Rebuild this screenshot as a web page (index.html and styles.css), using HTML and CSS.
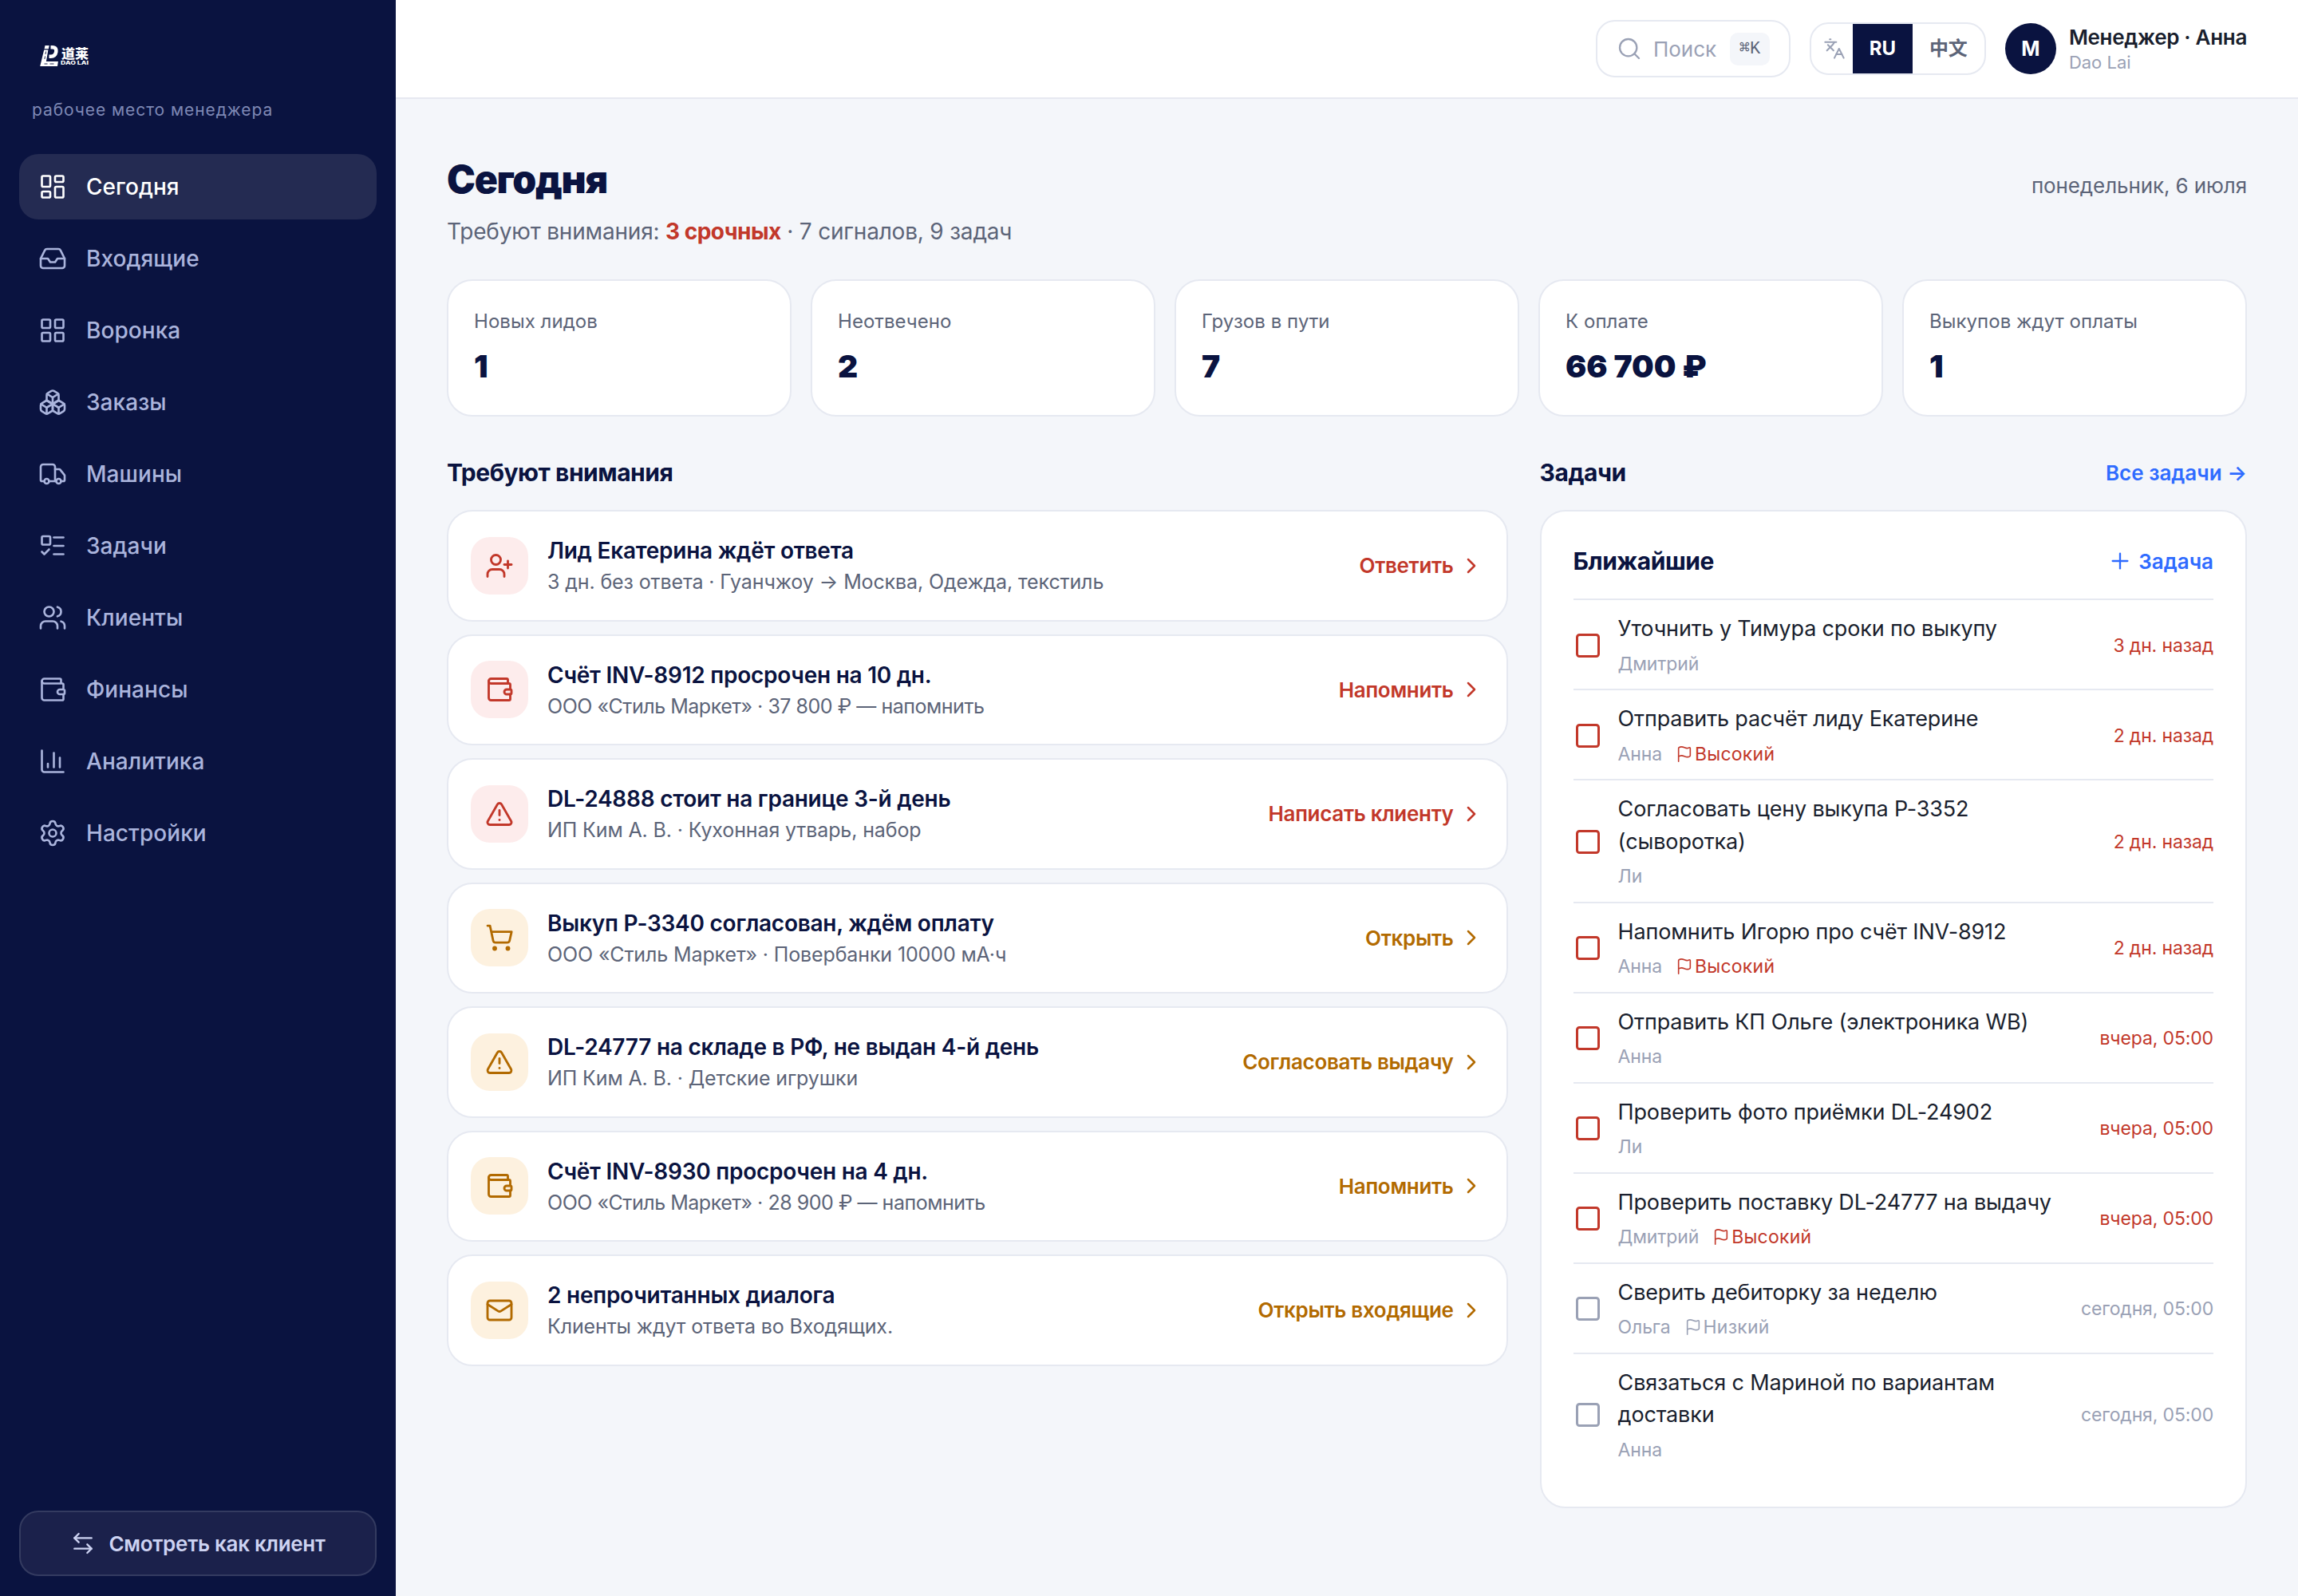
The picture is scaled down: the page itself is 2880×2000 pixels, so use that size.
FILE: index.html
```html
<!DOCTYPE html>
<html lang="ru">
<head>
<meta charset="utf-8">
<title>Сегодня · Dao Lai</title>
<link rel="stylesheet" href="styles.css">
</head>
<body>
<svg class="sprite" aria-hidden="true">
  <symbol id="dashboard" viewBox="0 0 24 24"><rect x="3" y="3" width="7" height="9" rx="1"/><rect x="14" y="3" width="7" height="5" rx="1"/><rect x="14" y="12" width="7" height="9" rx="1"/><rect x="3" y="16" width="7" height="5" rx="1"/></symbol>
  <symbol id="inbox" viewBox="0 0 24 24"><path d="M22 12h-6l-2 3h-4l-2-3H2"/><path d="M5.45 5.11 2 12v6a2 2 0 0 0 2 2h16a2 2 0 0 0 2-2v-6l-3.45-6.89A2 2 0 0 0 16.76 4H7.24a2 2 0 0 0-1.79 1.11z"/></symbol>
  <symbol id="grid" viewBox="0 0 24 24"><rect x="3" y="3" width="7" height="7" rx="1"/><rect x="14" y="3" width="7" height="7" rx="1"/><rect x="14" y="14" width="7" height="7" rx="1"/><rect x="3" y="14" width="7" height="7" rx="1"/></symbol>
  <symbol id="boxes" viewBox="0 0 24 24"><path d="M2.97 12.92A2 2 0 0 0 2 14.63v3.24a2 2 0 0 0 .97 1.71l3 1.8a2 2 0 0 0 2.06 0L12 19v-5.5l-5-3-4.03 2.42Z"/><path d="m7 16.5-4.74-2.85"/><path d="m7 16.5 5-3"/><path d="M7 16.5v5.17"/><path d="M12 13.5V19l3.97 2.38a2 2 0 0 0 2.06 0l3-1.8a2 2 0 0 0 .97-1.71v-3.24a2 2 0 0 0-.97-1.71L17 10.5l-5 3Z"/><path d="m17 16.5-5-3"/><path d="m17 16.5 4.74-2.85"/><path d="M17 16.5v5.17"/><path d="M7.97 4.42A2 2 0 0 0 7 6.13v4.37l5 3 5-3V6.13a2 2 0 0 0-.97-1.71l-3-1.8a2 2 0 0 0-2.06 0l-3 1.8Z"/><path d="M12 8 7.26 5.15"/><path d="m12 8 4.74-2.85"/><path d="M12 13.5V8"/></symbol>
  <symbol id="truck" viewBox="0 0 24 24"><path d="M14 18V6a2 2 0 0 0-2-2H4a2 2 0 0 0-2 2v11a1 1 0 0 0 1 1h2"/><path d="M15 18H9"/><path d="M19 18h2a1 1 0 0 0 1-1v-3.65a1 1 0 0 0-.22-.624l-3.48-4.35A1 1 0 0 0 17.52 8H14"/><circle cx="17" cy="18" r="2"/><circle cx="7" cy="18" r="2"/></symbol>
  <symbol id="todo" viewBox="0 0 24 24"><rect x="3" y="4" width="7" height="7" rx="1"/><path d="m3 17 2 2 4-4"/><path d="M13 5h8"/><path d="M13 12h8"/><path d="M13 19h8"/></symbol>
  <symbol id="users" viewBox="0 0 24 24"><path d="M16 21v-2a4 4 0 0 0-4-4H6a4 4 0 0 0-4 4v2"/><circle cx="9" cy="7" r="4"/><path d="M22 21v-2a4 4 0 0 0-3-3.87"/><path d="M16 3.13a4 4 0 0 1 0 7.75"/></symbol>
  <symbol id="wallet" viewBox="0 0 24 24"><path d="M19 7V4a1 1 0 0 0-1-1H5a2 2 0 0 0 0 4h15a1 1 0 0 1 1 1v4h-3a2 2 0 0 0 0 4h3a1 1 0 0 0 1-1v-2a1 1 0 0 0-1-1"/><path d="M3 5v14a2 2 0 0 0 2 2h15a1 1 0 0 0 1-1v-4"/></symbol>
  <symbol id="chart" viewBox="0 0 24 24"><path d="M3 3v16a2 2 0 0 0 2 2h16"/><path d="M18 17V9"/><path d="M13 17V5"/><path d="M8 17v-3"/></symbol>
  <symbol id="settings" viewBox="0 0 24 24"><path d="M9.671 4.136a2.34 2.34 0 0 1 4.659 0 2.34 2.34 0 0 0 3.319 1.915 2.34 2.34 0 0 1 2.33 4.033 2.34 2.34 0 0 0 0 3.831 2.34 2.34 0 0 1-2.33 4.033 2.34 2.34 0 0 0-3.319 1.915 2.34 2.34 0 0 1-4.659 0 2.34 2.34 0 0 0-3.32-1.915 2.34 2.34 0 0 1-2.33-4.033 2.34 2.34 0 0 0 0-3.831A2.34 2.34 0 0 1 6.35 6.051a2.34 2.34 0 0 0 3.319-1.915"/><circle cx="12" cy="12" r="3"/></symbol>
  <symbol id="swap" viewBox="0 0 24 24"><path d="M8 3 4 7l4 4"/><path d="M4 7h16"/><path d="m16 21 4-4-4-4"/><path d="M20 17H4"/></symbol>
  <symbol id="search" viewBox="0 0 24 24"><circle cx="11" cy="11" r="8"/><path d="m21 21-4.3-4.3"/></symbol>
  <symbol id="languages" viewBox="0 0 24 24"><path d="m5 8 6 6"/><path d="m4 14 6-6 2-3"/><path d="M2 5h12"/><path d="M7 2h1"/><path d="m22 22-5-10-5 10"/><path d="M14 18h6"/></symbol>
  <symbol id="user-plus" viewBox="0 0 24 24"><path d="M16 21v-2a4 4 0 0 0-4-4H6a4 4 0 0 0-4 4v2"/><circle cx="9" cy="7" r="4"/><path d="M19 8v6"/><path d="M22 11h-6"/></symbol>
  <symbol id="alert" viewBox="0 0 24 24"><path d="m21.73 18-8-14a2 2 0 0 0-3.48 0l-8 14A2 2 0 0 0 4 21h16a2 2 0 0 0 1.73-3"/><path d="M12 9v4"/><path d="M12 17h.01"/></symbol>
  <symbol id="cart" viewBox="0 0 24 24"><circle cx="8" cy="21" r="1"/><circle cx="19" cy="21" r="1"/><path d="M2.05 2.05h2l2.66 12.42a2 2 0 0 0 2 1.58h9.78a2 2 0 0 0 1.95-1.57l1.65-7.43H5.12"/></symbol>
  <symbol id="mail" viewBox="0 0 24 24"><rect x="2" y="4" width="20" height="16" rx="2"/><path d="m22 7-8.991 5.727a2 2 0 0 1-2.009 0L2 7"/></symbol>
  <symbol id="chevron" viewBox="0 0 24 24"><path d="m9 18 6-6-6-6"/></symbol>
  <symbol id="plus" viewBox="0 0 24 24"><path d="M5 12h14"/><path d="M12 5v14"/></symbol>
  <symbol id="square" viewBox="0 0 24 24"><rect x="3" y="3" width="18" height="18" rx="2"/></symbol>
  <symbol id="flag" viewBox="0 0 24 24"><path d="M4 22V4a1 1 0 0 1 .4-.8A6 6 0 0 1 8 2c3 0 5 2 7.333 2q2 0 3.067-.8A1 1 0 0 1 20 4v10a1 1 0 0 1-.4.8A6 6 0 0 1 16 16c-3 0-5-2-8-2a6 6 0 0 0-4 1.528"/></symbol>
</svg>

<div class="app">
  <aside class="sidebar">
    <svg class="logo" viewBox="0 0 72 36" role="img" aria-label="Dao Lai">
      <path class="logo-fill" d="M8.500 5h5.200l-.8 4.200H7.600z M7.200 10.400h5.200l-2.500 14.600h15l-.9 6H2.200z"/>
      <path class="logo-arc" d="M15.500 7.200h2.300c4 0 5 2.800 4.500 5.600-.7 3.800-3 5.900-6.500 5.900h-2.300"/>
      <path class="logo-road" d="M9.600 12.500l-.6 3.500M8.500 18.500l-.6 3.500M7.500 28h4M14.500 28h5"/>
      <text class="logo-cn" x="29" y="24" textLength="34" lengthAdjust="spacingAndGlyphs">道莱</text>
      <text class="logo-en" x="28" y="32" textLength="35" lengthAdjust="spacingAndGlyphs">DAO LAI</text>
    </svg>
    <p class="workspace">рабочее место менеджера</p>
    <nav class="nav">
      <a class="nav-item active"><svg class="icon"><use href="#dashboard"/></svg>Сегодня</a>
      <a class="nav-item"><svg class="icon"><use href="#inbox"/></svg>Входящие</a>
      <a class="nav-item"><svg class="icon"><use href="#grid"/></svg>Воронка</a>
      <a class="nav-item"><svg class="icon"><use href="#boxes"/></svg>Заказы</a>
      <a class="nav-item"><svg class="icon"><use href="#truck"/></svg>Машины</a>
      <a class="nav-item"><svg class="icon"><use href="#todo"/></svg>Задачи</a>
      <a class="nav-item"><svg class="icon"><use href="#users"/></svg>Клиенты</a>
      <a class="nav-item"><svg class="icon"><use href="#wallet"/></svg>Финансы</a>
      <a class="nav-item"><svg class="icon"><use href="#chart"/></svg>Аналитика</a>
      <a class="nav-item"><svg class="icon"><use href="#settings"/></svg>Настройки</a>
    </nav>
    <button class="client-view"><svg class="icon"><use href="#swap"/></svg>Смотреть как клиент</button>
  </aside>

  <div class="page">
    <header class="topbar">
      <div class="search"><svg class="icon"><use href="#search"/></svg><span class="search-text">Поиск</span><kbd>⌘K</kbd></div>
      <div class="lang"><svg class="icon"><use href="#languages"/></svg><span class="lang-opt on">RU</span><span class="lang-opt cn">中文</span></div>
      <div class="user">
        <span class="avatar">М</span>
        <div><div class="user-name">Менеджер · Анна</div><div class="user-org">Dao Lai</div></div>
      </div>
    </header>

    <main class="main">
      <div class="title-row"><h1>Сегодня</h1><span class="date">понедельник, 6 июля</span></div>
      <p class="summary">Требуют внимания: <b>3 срочных</b> · 7 сигналов, 9 задач</p>

      <section class="stats">
        <div class="stat"><div class="stat-label">Новых лидов</div><div class="stat-value">1</div></div>
        <div class="stat"><div class="stat-label">Неотвечено</div><div class="stat-value">2</div></div>
        <div class="stat"><div class="stat-label">Грузов в пути</div><div class="stat-value">7</div></div>
        <div class="stat"><div class="stat-label">К оплате</div><div class="stat-value">66 700 ₽</div></div>
        <div class="stat"><div class="stat-label">Выкупов ждут оплаты</div><div class="stat-value">1</div></div>
      </section>

      <div class="columns">
        <section>
          <div class="section-head"><h2>Требуют внимания</h2></div>
          <div class="alerts">
            <a class="alert red"><span class="badge"><svg class="icon"><use href="#user-plus"/></svg></span><div class="alert-text"><div class="alert-title">Лид Екатерина ждёт ответа</div><div class="alert-sub">3 дн. без ответа · Гуанчжоу → Москва, Одежда, текстиль</div></div><span class="action">Ответить<svg class="icon"><use href="#chevron"/></svg></span></a>
            <a class="alert red"><span class="badge"><svg class="icon"><use href="#wallet"/></svg></span><div class="alert-text"><div class="alert-title">Счёт INV-8912 просрочен на 10 дн.</div><div class="alert-sub tight">ООО «Стиль Маркет» · 37 800 ₽ — напомнить</div></div><span class="action">Напомнить<svg class="icon"><use href="#chevron"/></svg></span></a>
            <a class="alert red"><span class="badge"><svg class="icon"><use href="#alert"/></svg></span><div class="alert-text"><div class="alert-title">DL-24888 стоит на границе 3-й день</div><div class="alert-sub">ИП Ким А. В. · Кухонная утварь, набор</div></div><span class="action">Написать клиенту<svg class="icon"><use href="#chevron"/></svg></span></a>
            <a class="alert amber"><span class="badge"><svg class="icon"><use href="#cart"/></svg></span><div class="alert-text"><div class="alert-title">Выкуп P-3340 согласован, ждём оплату</div><div class="alert-sub">ООО «Стиль Маркет» · Повербанки 10000 мА·ч</div></div><span class="action">Открыть<svg class="icon"><use href="#chevron"/></svg></span></a>
            <a class="alert amber"><span class="badge"><svg class="icon"><use href="#alert"/></svg></span><div class="alert-text"><div class="alert-title">DL-24777 на складе в РФ, не выдан 4-й день</div><div class="alert-sub">ИП Ким А. В. · Детские игрушки</div></div><span class="action">Согласовать выдачу<svg class="icon"><use href="#chevron"/></svg></span></a>
            <a class="alert amber"><span class="badge"><svg class="icon"><use href="#wallet"/></svg></span><div class="alert-text"><div class="alert-title">Счёт INV-8930 просрочен на 4 дн.</div><div class="alert-sub tight">ООО «Стиль Маркет» · 28 900 ₽ — напомнить</div></div><span class="action">Напомнить<svg class="icon"><use href="#chevron"/></svg></span></a>
            <a class="alert amber"><span class="badge"><svg class="icon"><use href="#mail"/></svg></span><div class="alert-text"><div class="alert-title">2 непрочитанных диалога</div><div class="alert-sub">Клиенты ждут ответа во Входящих.</div></div><span class="action">Открыть входящие<svg class="icon"><use href="#chevron"/></svg></span></a>
          </div>
        </section>

        <section>
          <div class="section-head"><h2>Задачи</h2><a class="link">Все задачи →</a></div>
          <div class="tasks">
            <div class="tasks-head"><h3>Ближайшие</h3><a class="link"><svg class="icon"><use href="#plus"/></svg>Задача</a></div>
            <div class="task late"><svg class="icon check"><use href="#square"/></svg><div class="task-text"><div class="task-title">Уточнить у Тимура сроки по выкупу</div><div class="task-meta">Дмитрий</div></div><span class="due">3 дн. назад</span></div>
            <div class="task late"><svg class="icon check"><use href="#square"/></svg><div class="task-text"><div class="task-title">Отправить расчёт лиду Екатерине</div><div class="task-meta">Анна<span class="prio high"><svg class="icon"><use href="#flag"/></svg>Высокий</span></div></div><span class="due">2 дн. назад</span></div>
            <div class="task late"><svg class="icon check"><use href="#square"/></svg><div class="task-text"><div class="task-title">Согласовать цену выкупа P-3352<br>(сыворотка)</div><div class="task-meta">Ли</div></div><span class="due">2 дн. назад</span></div>
            <div class="task late"><svg class="icon check"><use href="#square"/></svg><div class="task-text"><div class="task-title">Напомнить Игорю про счёт INV-8912</div><div class="task-meta">Анна<span class="prio high"><svg class="icon"><use href="#flag"/></svg>Высокий</span></div></div><span class="due">2 дн. назад</span></div>
            <div class="task late"><svg class="icon check"><use href="#square"/></svg><div class="task-text"><div class="task-title">Отправить КП Ольге (электроника WB)</div><div class="task-meta">Анна</div></div><span class="due">вчера, 05:00</span></div>
            <div class="task late"><svg class="icon check"><use href="#square"/></svg><div class="task-text"><div class="task-title">Проверить фото приёмки DL-24902</div><div class="task-meta">Ли</div></div><span class="due">вчера, 05:00</span></div>
            <div class="task late"><svg class="icon check"><use href="#square"/></svg><div class="task-text"><div class="task-title">Проверить поставку DL-24777 на выдачу</div><div class="task-meta">Дмитрий<span class="prio high"><svg class="icon"><use href="#flag"/></svg>Высокий</span></div></div><span class="due">вчера, 05:00</span></div>
            <div class="task"><svg class="icon check"><use href="#square"/></svg><div class="task-text"><div class="task-title">Сверить дебиторку за неделю</div><div class="task-meta">Ольга<span class="prio"><svg class="icon"><use href="#flag"/></svg>Низкий</span></div></div><span class="due">сегодня, 05:00</span></div>
            <div class="task"><svg class="icon check"><use href="#square"/></svg><div class="task-text"><div class="task-title">Связаться с Мариной по вариантам<br>доставки</div><div class="task-meta">Анна</div></div><span class="due">сегодня, 05:00</span></div>
          </div>
        </section>
      </div>
    </main>
  </div>
</div>
</body>
</html>
```
FILE: styles.css
```css
:root {
  --navy: #0a1340;
  --bg: #f4f6fa;
  --line: #e6e9f1;
  --ink: #1a1f2e;
  --muted: #5c6478;
  --faint: #9aa1b5;
  --red: #c2382a;
  --amber: #b26a00;
  --blue: #2f6bff;
}

* { box-sizing: border-box; }

body {
  margin: 0;
  font-family: Inter, "Noto Sans CJK SC", sans-serif;
  font-size: 28px;
  color: var(--ink);
  background: var(--bg);
}

h1, h2, h3, p { margin: 0; }

.sprite { display: none; }

.icon {
  width: 36px;
  height: 36px;
  flex: none;
  fill: none;
  stroke: currentColor;
  stroke-width: 1.75;
  stroke-linecap: round;
  stroke-linejoin: round;
}

.app { display: flex; height: 2000px; }

/* Sidebar */
.sidebar {
  display: flex;
  flex-direction: column;
  width: 496px;
  flex: none;
  padding: 52px 24px 25px;
  background: var(--navy);
}

.logo { width: 72px; height: 36px; margin-left: 24px; }
.logo-fill { fill: #fff; }
.logo-arc { fill: none; stroke: #fff; stroke-width: 4.6; }
.logo-road { fill: none; stroke: var(--navy); stroke-width: .9; }
.logo-cn { fill: #fff; font: 900 16px "Noto Sans CJK SC", sans-serif; }
.logo-en { fill: #fff; font: 800 6.500px Inter, sans-serif; }
.logo-cn, .logo-en { transform: translateY(-3px); }

.workspace {
  margin: 33px 0 38px 16px;
  font-size: 21px;
  line-height: 34px;
  letter-spacing: .044em;
  color: #7e88b4;
}

.nav { display: flex; flex-direction: column; gap: 8px; }

.nav-item {
  display: flex;
  align-items: center;
  gap: 24px;
  height: 82px;
  padding-left: 24px;
  border-radius: 24px;
  font-weight: 500;
  letter-spacing: .002em;
  color: #aab4dc;
}
.nav-item.active { background: #242b52; color: #fff; }

.client-view {
  display: flex;
  align-items: center;
  justify-content: center;
  gap: 16px;
  height: 82px;
  margin-top: auto;
  border: 2px solid #343b60;
  border-radius: 24px;
  background: #1b214b;
  color: #cdd3f2;
  font: 600 26px Inter, sans-serif;
  letter-spacing: -.011em;
}
.client-view .icon { width: 32px; height: 32px; }

/* Top bar */
.page { flex: 1; min-width: 0; }

.topbar {
  display: flex;
  justify-content: flex-end;
  align-items: center;
  gap: 24px;
  height: 124px;
  padding-right: 64px;
  border-bottom: 2px solid var(--line);
  background: #fff;
}

.search {
  display: flex;
  align-items: center;
  width: 244px;
  height: 72px;
  padding: 0 24px;
  border: 2px solid var(--line);
  border-radius: 24px;
  color: var(--faint);
  font-size: 26px;
}
.search .icon { width: 32px; height: 32px; }
.search-text { margin-left: 14px; }

kbd {
  margin-left: auto;
  width: 50px;
  height: 41px;
  border-radius: 10px;
  background: var(--bg);
  color: var(--muted);
  font: 22px/41px "Liberation Mono", "DejaVu Sans Mono", monospace;
  text-align: center;
}

.lang {
  display: flex;
  align-items: center;
  height: 66px;
  padding-left: 15px;
  border: 2px solid var(--line);
  border-radius: 24px;
  color: var(--faint);
  overflow: hidden;
}
.lang .icon { width: 28px; height: 28px; margin-right: 9px; }
.lang-opt { width: 75px; line-height: 62px; text-align: center; font-size: 24px; font-weight: 700; }
.lang-opt.on { background: var(--navy); color: #fff; }
.lang-opt.cn { width: 90px; color: var(--muted); }

.user { display: flex; align-items: center; gap: 16px; }
.avatar {
  width: 64px;
  height: 64px;
  border-radius: 50%;
  background: var(--navy);
  color: #fff;
  font-size: 25px;
  font-weight: 700;
  line-height: 64px;
  text-align: center;
}
.user-name { font-size: 26px; font-weight: 600; line-height: 35px; letter-spacing: -.012em; }
.user-org { font-size: 22px; line-height: 29px; color: var(--faint); }

/* Main */
.main { padding: 72px 64px 0; }

.title-row { display: flex; justify-content: space-between; align-items: baseline; }
h1 { font-size: 48px; font-weight: 900; line-height: 58px; letter-spacing: -.025em; color: var(--navy); }
.date { font-size: 26px; letter-spacing: -.004em; color: var(--muted); }

.summary { margin: 16px 0 39px; line-height: 41px; letter-spacing: -.007em; color: var(--muted); }
.summary b { font-weight: 700; letter-spacing: -.019em; color: var(--red); }

.stats { display: grid; grid-template-columns: repeat(5, 1fr); gap: 24px; }
.stat {
  height: 172px;
  padding: 33px 32px 31px;
  border: 2px solid var(--line);
  border-radius: 32px;
  background: #fff;
}
.stat-label { font-size: 24px; line-height: 35px; letter-spacing: .002em; color: var(--muted); }
.stat-value { margin-top: 15px; font-size: 39px; font-weight: 900; line-height: 48px; color: var(--navy); }

.columns { display: grid; grid-template-columns: 1.5fr 1fr; gap: 40px; margin-top: 48px; }

.section-head, .tasks-head {
  display: flex;
  align-items: center;
  justify-content: space-between;
  height: 44px;
  margin-bottom: 25px;
}
h2, h3 { font-size: 30px; font-weight: 700; letter-spacing: -.016em; color: var(--navy); }

.link {
  display: flex;
  align-items: center;
  gap: 7px;
  font-size: 26px;
  font-weight: 600;
  color: var(--blue);
}
.link .icon { width: 32px; height: 32px; }

.alerts { display: flex; flex-direction: column; gap: 16px; }
.alert {
  display: flex;
  align-items: center;
  gap: 24px;
  height: 139.5px;
  padding: 0 28px;
  border: 2px solid var(--line);
  border-radius: 32px;
  background: #fff;
}
.badge {
  display: grid;
  place-items: center;
  width: 72px;
  height: 72px;
  border-radius: 24px;
}
.badge .icon { stroke-width: 1.9; }
.red .badge { background: #fdecec; color: var(--red); }
.amber .badge { background: #fdf1df; color: var(--amber); }
.alert-text { flex: 1; padding-top: 1px; }
.alert-title { font-weight: 600; line-height: 40px; letter-spacing: -.009em; color: var(--navy); }
.alert-sub { font-size: 25px; line-height: 38px; letter-spacing: -.005em; color: var(--muted); }
.alert-sub.tight { letter-spacing: -.019em; }
.action {
  display: flex;
  align-items: center;
  gap: 6px;
  font-size: 26px;
  font-weight: 600;
  letter-spacing: -.012em;
}
.action .icon { width: 32px; height: 32px; stroke-width: 1.9; }
.red .action { color: var(--red); }
.amber .action { color: var(--amber); }

.tasks {
  padding: 40px;
  border: 2px solid var(--line);
  border-radius: 32px;
  background: #fff;
}
.task {
  display: flex;
  align-items: center;
  gap: 20px;
  padding: 16px 0 14px;
  border-top: 2px solid var(--line);
}
.check { color: var(--faint); stroke-width: 2; }
.late .check { color: var(--red); }
.task-text { flex: 1; }
.task-title { font-size: 27px; line-height: 40.6px; letter-spacing: -.006em; }
.task-meta {
  display: flex;
  gap: 17px;
  margin-top: 6px;
  font-size: 23px;
  line-height: 34.4px;
  letter-spacing: -.006em;
  color: var(--faint);
}
.prio { display: flex; align-items: center; gap: 2px; letter-spacing: .01em; }
.prio .icon { width: 22px; height: 22px; }
.prio.high { color: var(--red); }
.due { font-size: 23px; color: var(--faint); letter-spacing: -.006em; }
.late .due { color: var(--red); }
```
